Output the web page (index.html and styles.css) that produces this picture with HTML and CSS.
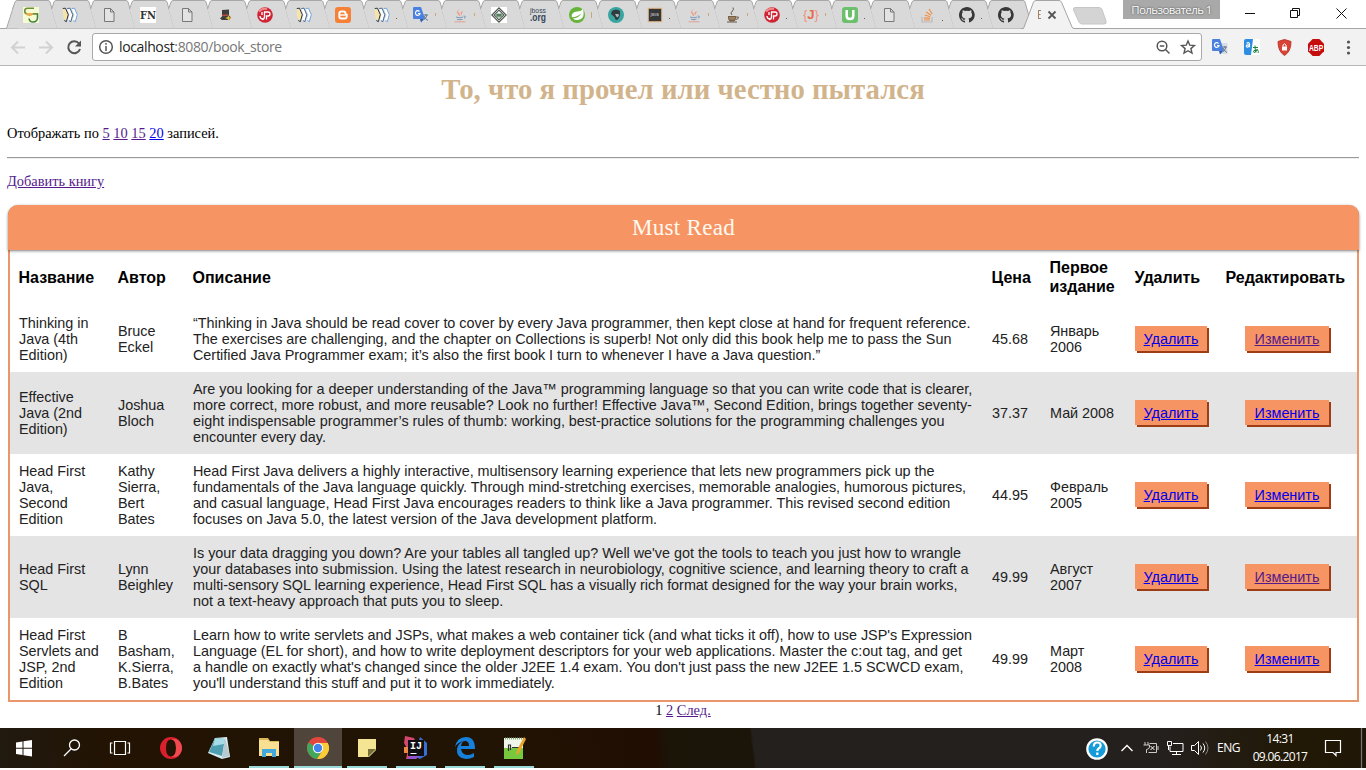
FILE: index.html
```html
<!DOCTYPE html>
<html lang="ru">
<head>
<meta charset="utf-8">
<title>Book store</title>
<link rel="stylesheet" href="styles.css">
</head>
<body>
<svg class="defs" width="0" height="0">
  <defs>
    <symbol id="tab" viewBox="0 0 52 29" overflow="visible"><path d="M12 28.500 6.600 9 9 2Q9.600.5 11 .5H42Q43.500.5 44 2L51.500 28.500Z" fill="#d9d9d9"/><path d="M6.600 9 9 2Q9.600.5 11 .5H42Q43.500.5 44 2L51.500 28.500" fill="none" stroke="#a8a8a8"/></symbol>
    <symbol id="i-sg" viewBox="0 0 16 16"><rect width="16" height="16" fill="#f4fbd5"/><path d="M11 1.300H4.500a2.800 2.800 0 0 0 0 5.600H15" fill="none" stroke="#6f8f35" stroke-width="1.600"/><path d="M14.500 6.500v4.500q-.5 4-4.500 4-3.500 0-4-3.500" fill="none" stroke="#42803b" stroke-width="1.600"/><path d="M3 6h7q0 3-3.500 3T3 6Z" fill="#e8a94f"/></symbol>
    <symbol id="i-books" viewBox="0 0 16 16"><path d="M.5 2.500 3 1.500 6 8 4.500 14 1.500 11Z" fill="#f8e5a6"/><path d="M6.500 2 9 8l-2 6M11 2l3 6-2.500 6" fill="none" stroke="#fff" stroke-width="2.500"/><path d="M.8 1.500 3.500 1.200 6.300 7.700 4.300 14.700 2.300 13.500" fill="none" stroke="#293849"/><path d="M5.300 1.500 8 1.200l2.800 6.500-2 7-2-1.200" fill="none" stroke="#476a92"/><path d="M9.800 1.500l2.700-.3 2.800 6.500-2 7-2-1.200" fill="none" stroke="#70a5df"/></symbol>
    <symbol id="i-page" viewBox="0 0 16 16"><path d="M3.500 1.500h6l3.500 3.500v9.500H3.500ZM9.500 1.500V5H13" fill="#e3e3e3" stroke="#777"/></symbol>
    <symbol id="i-fn" viewBox="0 0 16 16"><rect width="16" height="16" fill="#fff"/><text x="0" y="12" textLength="16" lengthAdjust="spacingAndGlyphs" font-family="DejaVu Serif" font-size="10.500" font-weight="700" fill="#333">FN</text></symbol>
    <symbol id="i-hat" viewBox="0 0 16 16"><path d="M4 3 11 2.500v6l2 2-2 2.500H4l-2-1.500 2-2Z" fill="#3d3d3d"/><path d="M4 8.500 10 8" stroke="#b84e40" stroke-width="1.300"/><path d="m10.500 8 .7 2.200L14 11l-2.800.8L10.500 14l-1-2.200L7 11l2.500-.8Z" fill="#f0c62d"/></symbol>
    <symbol id="i-red" viewBox="0 0 16 16"><circle cx="8" cy="8" r="7.800" fill="#cf2434"/><path d="M2 4.500Q5 1 10 2" stroke="#f08c8c" stroke-width="2" fill="none"/><path d="M5 12.500q2.500 0 2.500-3V5h3.500q2 0 2 2t-2 2H9.500v3.500M3 9q0 3 3 3M5 5v3" fill="none" stroke="#fff" stroke-width="1.300"/></symbol>
    <symbol id="i-blog" viewBox="0 0 16 16"><rect width="16" height="16" rx="3" fill="#f58038"/><path d="M6.500 4.500h2q2 0 2 2 .2 1 1.200 1.200v1.800q0 2-2 2H6.300q-2 0-2-2v-3q0-2 2.200-2Z" fill="none" stroke="#fff" stroke-width="1.900"/><path d="M4 8h7" stroke="#fff" stroke-width="1.400"/></symbol>
    <symbol id="i-gt" viewBox="0 0 16 16"><path d="M6 4h9.500v11H9Z" fill="#d8dde3"/><path d="M0 1q0-1 1-1h7l4 12H1q-1 0-1-1Z" fill="#4a80df"/><path d="m7 12 4 0-3 3.500Z" fill="#285aab"/><path d="M6.500 4.500A2.300 2.300 0 1 0 7 6.500H5" fill="none" stroke="#fff" stroke-width="1.200"/><path d="M10.500 8h4.500M12.800 7v1.500M14 8q-1 4-3.500 5M11 9q1 3 4 4.500" fill="none" stroke="#687788"/></symbol>
    <symbol id="i-java" viewBox="0 0 16 16"><path d="M9 1Q4 4 7.500 6.500 9 8 7.500 9.500 6.500 7.500 5.500 6.500 3.500 4 9 1Zm2 3Q7 5.500 9 7.500 10 9 8.500 9.700" fill="#ef9b84"/><path d="M4 10q4 1.500 7 0M5 12.200q3 .8 5.500 0M11.500 9q3 0 .8 2.500" fill="none" stroke="#819dbd" stroke-width="1.100"/><path d="M2.500 14.800h11" stroke="#e3a090"/></symbol>
    <symbol id="i-diamond" viewBox="0 0 16 16"><rect width="16" height="16" fill="#fff"/><path d="M8 .8 15.200 8 8 15.200.8 8ZM8 3.200 12.800 8 8 12.800 3.200 8Z" fill="none" stroke="#4b554e" stroke-width="1.100"/><path d="M5 6.500h6v4H5Z" fill="#7aa184"/><path d="M6 8h4" stroke="#355c42"/></symbol>
    <symbol id="i-jboss" viewBox="0 0 16 16" overflow="visible"><text x="0" y="6" textLength="16" lengthAdjust="spacingAndGlyphs" font-family="Liberation Sans" font-size="7.500" fill="#34465a">jboss</text><text x="0" y="14" textLength="16" lengthAdjust="spacingAndGlyphs" font-family="Liberation Sans" font-size="10.500" font-weight="700" fill="#34465a">.org</text></symbol>
    <symbol id="i-leaf" viewBox="0 0 16 16"><circle cx="8" cy="8" r="8" fill="#68b43a"/><path d="M14 2q2.500 10-5 11-3 .5-5-1.500Q10 11 12.500 6 9 10 3 10.300 1.500 5.500 8 4.500 12 4.500 14 2Z" fill="#fff"/></symbol>
    <symbol id="i-face" viewBox="0 0 16 16"><circle cx="8" cy="8" r="8" fill="#38a5a0"/><path d="M4 4q4-3 8 0v4q-1 5-4 5-1-1-1.500-3L3 7Z" fill="#303a3f"/><path d="M7 7h3.500l.5 2-2 1.500Z" fill="#a8b8b9"/></symbol>
    <symbol id="i-dark" viewBox="0 0 16 16"><rect x="1.300" y="1.300" width="13.400" height="13.400" fill="#343638" stroke="#e2b27d"/><text x="3.500" y="9" font-size="4.500" font-family="Liberation Sans" fill="#ccc">java</text></symbol>
    <symbol id="i-cup" viewBox="0 0 16 16"><path d="M3 9h8v2q0 2-2 3.500H5q-2-1.500-2-3.500Z" fill="#795f46"/><path d="M11 10h2.500q0 2.500-3 2.500M2 15h10M7 8q-2.500-2 .5-4 1.500-1.500.5-3.500" fill="none" stroke="#6b594a"/><path d="M5 10v2.500M7 10v3M9 10v2.500" stroke="#cbb58c" stroke-width=".8"/></symbol>
    <symbol id="i-j" viewBox="0 0 16 16"><text x="0" y="12" textLength="16" lengthAdjust="spacingAndGlyphs" font-family="Liberation Sans" font-size="12" fill="#f0937c">{<tspan font-weight="700" fill="#e96a4b">J</tspan>}</text></symbol>
    <symbol id="i-u" viewBox="0 0 16 16"><rect width="16" height="16" rx="3" fill="#6cc06b"/><path d="M4.700 3v6q0 3 3.300 3t3.300-3V3" fill="none" stroke="#fff" stroke-width="2.500"/></symbol>
    <symbol id="i-so" viewBox="0 0 16 16"><path d="M2 10v5h10v-5" fill="none" stroke="#b9b9b9" stroke-width="1.200"/><path d="M4 13h6M4 10.800l6 .6M4.700 8l5.600 1.700M6.200 5l4.800 3.300M9 2l3.200 5" stroke="#f29046" stroke-width="1.200"/></symbol>
    <symbol id="i-git" viewBox="0 0 16 16"><path d="M8 0C3.600 0 0 3.600 0 8c0 3.500 2.300 6.500 5.500 7.600.4.100.5-.2.500-.4v-1.500c-2.200.5-2.700-.9-2.700-.9-.4-.9-.9-1.200-.9-1.200-.7-.5.100-.5.100-.5.800.1 1.200.8 1.200.8.700 1.200 1.900.9 2.300.7.100-.5.300-.9.500-1.100-1.800-.2-3.600-.9-3.600-4 0-.9.300-1.600.8-2.100-.1-.200-.4-1 .1-2.100 0 0 .7-.2 2.200.8a7.700 7.700 0 0 1 4 0c1.500-1 2.200-.8 2.200-.8.400 1.100.2 1.900.1 2.100.5.600.8 1.300.8 2.100 0 3.100-1.900 3.700-3.700 3.900.3.300.6.800.6 1.500v2.200c0 .2.100.5.500.4A8 8 0 0 0 8 0Z" fill="#373737"/></symbol>
  </defs>
</svg>

<header class="browser">
  <div class="tabs">
    <svg class="tab"><path d="M.5 28.500 8 6H20V28.500Z" fill="#d9d9d9"/><path d="M.5 28.500 8 5" stroke="#a8a8a8"/><use href="#tab" width="52" height="29"/><use href="#i-sg" x="17" y="7" width="16" height="16"/></svg>
    <svg class="tab"><use href="#tab" width="52" height="29"/><use href="#i-books" x="17" y="7" width="16" height="16"/></svg>
    <svg class="tab"><use href="#tab" width="52" height="29"/><use href="#i-page" x="17" y="7" width="16" height="16"/></svg>
    <svg class="tab"><use href="#tab" width="52" height="29"/><use href="#i-fn" x="17" y="7" width="16" height="16"/></svg>
    <svg class="tab"><use href="#tab" width="52" height="29"/><use href="#i-page" x="17" y="7" width="16" height="16"/></svg>
    <svg class="tab"><use href="#tab" width="52" height="29"/><use href="#i-hat" x="17" y="7" width="16" height="16"/></svg>
    <svg class="tab"><use href="#tab" width="52" height="29"/><use href="#i-red" x="17" y="7" width="16" height="16"/></svg>
    <svg class="tab"><use href="#tab" width="52" height="29"/><use href="#i-books" x="17" y="7" width="16" height="16"/></svg>
    <svg class="tab"><use href="#tab" width="52" height="29"/><use href="#i-blog" x="17" y="7" width="16" height="16"/></svg>
    <svg class="tab"><use href="#tab" width="52" height="29"/><use href="#i-books" x="17" y="7" width="16" height="16"/><path class="dot" d="M39 18.500h1"/></svg>
    <svg class="tab"><use href="#tab" width="52" height="29"/><use href="#i-gt" x="17" y="7" width="16" height="16"/><path class="peek" d="M39.500 13v3"/></svg>
    <svg class="tab"><use href="#tab" width="52" height="29"/><use href="#i-java" x="17" y="7" width="16" height="16"/><path class="peek" d="M39.500 13v3"/></svg>
    <svg class="tab"><use href="#tab" width="52" height="29"/><use href="#i-diamond" x="17" y="7" width="16" height="16"/></svg>
    <svg class="tab"><use href="#tab" width="52" height="29"/><use href="#i-jboss" x="17" y="7" width="16" height="16"/></svg>
    <svg class="tab"><use href="#tab" width="52" height="29"/><use href="#i-leaf" x="17" y="7" width="16" height="16"/><path class="peek" d="M39.500 12v6"/></svg>
    <svg class="tab"><use href="#tab" width="52" height="29"/><use href="#i-face" x="17" y="7" width="16" height="16"/></svg>
    <svg class="tab"><use href="#tab" width="52" height="29"/><use href="#i-dark" x="17" y="7" width="16" height="16"/><path class="dot" d="M39 18.500h1"/></svg>
    <svg class="tab"><use href="#tab" width="52" height="29"/><use href="#i-java" x="17" y="7" width="16" height="16"/><path class="peek" d="M39.500 13v3"/></svg>
    <svg class="tab"><use href="#tab" width="52" height="29"/><use href="#i-cup" x="17" y="7" width="16" height="16"/><path class="peek" d="M39.500 13v3"/></svg>
    <svg class="tab"><use href="#tab" width="52" height="29"/><use href="#i-red" x="17" y="7" width="16" height="16"/><path class="dot" d="M39 18.500h1"/></svg>
    <svg class="tab"><use href="#tab" width="52" height="29"/><use href="#i-j" x="17" y="7" width="16" height="16"/><path class="peek" d="M39.500 13v3"/></svg>
    <svg class="tab"><use href="#tab" width="52" height="29"/><use href="#i-u" x="17" y="7" width="16" height="16"/><path class="dot" d="M39 18.500h1"/></svg>
    <svg class="tab"><use href="#tab" width="52" height="29"/><use href="#i-page" x="17" y="7" width="16" height="16"/></svg>
    <svg class="tab"><use href="#tab" width="52" height="29"/><use href="#i-so" x="17" y="7" width="16" height="16"/><path class="dot" d="M39 20.500h1"/></svg>
    <svg class="tab"><use href="#tab" width="52" height="29"/><use href="#i-git" x="17" y="7" width="16" height="16"/><path class="dot" d="M39 18.500h1"/></svg>
    <svg class="tab"><use href="#tab" width="52" height="29"/><use href="#i-git" x="17" y="7" width="16" height="16"/></svg>
    <svg class="tab active"><path d="M6.500 28.500 16.500 2.200Q17.300.5 19 .5H42Q43.700.5 44.500 2.200L55 27Q55.700 28.500 57 28.500V30H4V28.500Z" fill="#f2f2f2"/><path d="M4 28.500H6.500L16.500 2.200Q17.300.5 19 .5H42Q43.700.5 44.500 2.200L55 27Q55.700 28.500 57 28.500" fill="none" stroke="#a5a5a5"/><path d="M21.500 10v9M21.500 10.500h2.500M21.500 14.500h2M21.500 18.500h2.500" stroke="#a08368"/><path d="m31.500 11.500 7 7m0-7-7 7" stroke="#555" stroke-width="1.800"/><path d="M58 7.500H82Q84 7.500 85 9.500L89 21Q90 24 87 24H65Q63 24 62 22L56.500 10Q56 7.500 58 7.500Z" fill="#d4d4d4" stroke="#c6c6c6"/></svg>
    <span class="user">Пользователь 1</span>
    <svg class="winbtns" width="146" height="28" fill="none" stroke="#111"><path d="M25 13.500h10"/><path d="M70.500 10.500h7v7h-7ZM72.500 10.500v-2h7v7h-2"/><path d="m116.500 8.500 10 10m0-10-10 10"/></svg>
  </div>
  <div class="toolbar">
    <svg class="nav" width="92" height="36" fill="none" stroke-width="2"><path d="M25 18.500H12m6-6-6 6 6 6M39 18.500h13m-6-6 6 6-6 6" stroke="#d2d2d2"/><path d="M79 14.500A6 6 0 1 0 80 20" stroke="#555"/><path d="M81 11.500v6h-6Z" fill="#555"/></svg>
    <div class="omnibox">
      <svg width="22" height="26" fill="none" stroke="#555" stroke-width="1.500"><circle cx="13" cy="13" r="6.300"/><path d="M13 12v5M13 9v1.700"/></svg>
      <span class="url">localhost<i>:8080/book_store</i></span>
      <svg width="47" height="26" fill="none" stroke="#555" stroke-width="1.500"><circle cx="8" cy="12" r="4.800"/><path d="m11.500 15.500 4 4"/><path d="M5.800 12h4.400"/><path d="m34 7 1.800 4.200 4.600.4-3.500 3 1.100 4.500-4-2.400-4 2.400 1.100-4.500-3.500-3 4.600-.4Z" stroke-width="1.400"/></svg>
    </div>
    <svg class="ext" width="164" height="36"><use href="#i-gt" x="10" y="10" width="16" height="16"/><rect x="47" y="10" width="11" height="16" fill="#fff"/><path d="M42 12q0-2 2-2h7l-2 16h-5q-2 0-2-2Z" fill="#2c8de3"/><path d="M44.500 14.200q3-1.500 3 1v3m0-2.500q-3.500 0-3.200 1.700.5 1.500 3.200-.3" stroke="#fff" fill="none" stroke-width="1.200"/><path d="M51 18.500h5M53 16.500q0 5 1 7M55.500 20q-2 4-3.500 3.500-2-1.500 1.500-2.500 4-.5 2.500 3" stroke="#1b843d" fill="none"/><path d="m82.500 10.500 6.500 2q0 10-6.500 14Q76 22.500 76 12.500Z" fill="#d84335" stroke="#bd3a2f"/><path d="M80 17.500h5v4h-5Z" fill="#fff"/><path d="M81 17.500v-1.500q1.500-2.500 3 0v1.500" fill="none" stroke="#fff"/><path d="m110.700 10h6.600l4.700 4.700v7.600l-4.700 4.700h-6.600l-4.700-4.700v-7.600Z" fill="#c60d0d"/><text x="107" y="21.700" textLength="14.200" lengthAdjust="spacingAndGlyphs" font-family="Liberation Sans" font-size="8.500" font-weight="700" fill="#fff">ABP</text><g fill="#555"><circle cx="146.500" cy="13" r="1.600"/><circle cx="146.500" cy="18.500" r="1.600"/><circle cx="146.500" cy="24" r="1.600"/></g></svg>
  </div>
</header>

<main class="page">
  <h1>То, что я прочел или честно пытался</h1>
  <p class="count">Отображать по <a class="seen" href="#">5</a> <a class="seen" href="#">10</a> <a class="seen" href="#">15</a> <a href="#">20</a> записей.</p>
  <hr>
  <p class="add"><a class="seen" href="#">Добавить книгу</a></p>
  <section class="books">
    <div class="caption">Must Read</div>
    <table>
      <colgroup><col class="c1"><col class="c2"><col class="c3"><col class="c4"><col class="c5"><col class="c6"><col class="c7"></colgroup>
      <thead><tr><th>Название</th><th>Автор</th><th>Описание</th><th>Цена</th><th>Первое<br>издание</th><th>Удалить</th><th>Редактировать</th></tr></thead>
      <tbody>
        <tr class="short"><td>Thinking in<br>Java (4th<br>Edition)</td><td>Bruce<br>Eckel</td><td>“Thinking in Java should be read cover to cover by every Java programmer, then kept close at hand for frequent reference.<br>The exercises are challenging, and the chapter on Collections is superb! Not only did this book help me to pass the Sun<br>Certified Java Programmer exam; it’s also the first book I turn to whenever I have a Java question.”</td><td>45.68</td><td>Январь<br>2006</td><td><span class="btn"><a href="#">Удалить</a></span></td><td><span class="btn edit"><a class="seen" href="#">Изменить</a></span></td></tr>
        <tr><td>Effective<br>Java (2nd<br>Edition)</td><td>Joshua<br>Bloch</td><td>Are you looking for a deeper understanding of the Java™ programming language so that you can write code that is clearer,<br>more correct, more robust, and more reusable? Look no further! Effective Java™, Second Edition, brings together seventy-<br>eight indispensable programmer’s rules of thumb: working, best-practice solutions for the programming challenges you<br>encounter every day.</td><td>37.37</td><td>Май 2008</td><td><span class="btn"><a href="#">Удалить</a></span></td><td><span class="btn edit"><a href="#">Изменить</a></span></td></tr>
        <tr><td>Head First<br>Java,<br>Second<br>Edition</td><td>Kathy<br>Sierra,<br>Bert<br>Bates</td><td>Head First Java delivers a highly interactive, multisensory learning experience that lets new programmers pick up the<br>fundamentals of the Java language quickly. Through mind-stretching exercises, memorable analogies, humorous pictures,<br>and casual language, Head First Java encourages readers to think like a Java programmer. This revised second edition<br>focuses on Java 5.0, the latest version of the Java development platform.</td><td>44.95</td><td>Февраль<br>2005</td><td><span class="btn"><a href="#">Удалить</a></span></td><td><span class="btn edit"><a href="#">Изменить</a></span></td></tr>
        <tr><td>Head First<br>SQL</td><td>Lynn<br>Beighley</td><td>Is your data dragging you down? Are your tables all tangled up? Well we've got the tools to teach you just how to wrangle<br>your databases into submission. Using the latest research in neurobiology, cognitive science, and learning theory to craft a<br>multi-sensory SQL learning experience, Head First SQL has a visually rich format designed for the way your brain works,<br>not a text-heavy approach that puts you to sleep.</td><td>49.99</td><td>Август<br>2007</td><td><span class="btn"><a href="#">Удалить</a></span></td><td><span class="btn edit"><a class="seen" href="#">Изменить</a></span></td></tr>
        <tr><td>Head First<br>Servlets and<br>JSP, 2nd<br>Edition</td><td>B<br>Basham,<br>K.Sierra,<br>B.Bates</td><td>Learn how to write servlets and JSPs, what makes a web container tick (and what ticks it off), how to use JSP's Expression<br>Language (EL for short), and how to write deployment descriptors for your web applications. Master the c:out tag, and get<br>a handle on exactly what's changed since the older J2EE 1.4 exam. You don't just pass the new J2EE 1.5 SCWCD exam,<br>you'll understand this stuff and put it to work immediately.</td><td>49.99</td><td>Март<br>2008</td><td><span class="btn"><a href="#">Удалить</a></span></td><td><span class="btn edit"><a href="#">Изменить</a></span></td></tr>
      </tbody>
    </table>
  </section>
  <p class="pager">1 <a class="seen" href="#">2</a> <a class="seen" href="#">След.</a></p>
</main>

<footer class="taskbar">
  <div class="apps">
    <svg viewBox="0 0 48 40"><path d="m16 14.500 6.500-1v6.300H16Zm7.500-1.200 8.500-1.300v7.800h-8.500ZM16 20.800h6.500V27L16 26Zm7.500 0H32V28.500l-8.500-1.200Z" fill="#fff"/></svg>
    <svg viewBox="1 0 48 40" fill="none" stroke="#fff" stroke-width="1.300"><circle cx="26.500" cy="17" r="5"/><path d="m23 21-7 7"/></svg>
    <svg viewBox="2 0 48 40" fill="none" stroke="#fff" stroke-width="1.200"><path d="M18.500 13.500h11v13h-11ZM16.500 15h-2v10h2M31.500 15h2v10h-2"/></svg>
    <svg viewBox="0 0 48 40"><path d="M24 9a11 11 0 1 0 0 22 11 11 0 0 0 0-22Zm0 2.500q5 0 5 8.500t-5 8.500-5-8.500 5-8.500Z" fill="#d9202c" fill-rule="evenodd"/><path d="M24 11.500q4-1 7 .5 4 3.500 4 8t-4 8q-3 1.500-7 .5 5 0 5-8.500t-5-8.500Z" fill="#f04a50"/></svg>
    <svg viewBox="1 0 48 40"><path d="m20 10 12-1 3 20-8 2-14-6Z" fill="#d8eef3"/><path d="m20 10 10 1-3 17-13-4Z" fill="#4f9fb2"/><path d="m20 10 10 1-1 5-11 2Z" fill="#a5dce5"/><path d="m30 10 5 18-8 2Z" fill="#b9cbd1"/></svg>
    <svg class="open" viewBox="4 0 40 40"><path d="M14 10h9l2 3h9v5H14Z" fill="#d9b657"/><path d="M14 12h9l2 2h9v14H14Z" fill="#f8df92"/><path d="M17 29v-8h14v8h-4v-4h-6v4Z" fill="#43a8db"/></svg>
    <svg class="open current" viewBox="0 0 48 40"><circle cx="24" cy="20" r="11" fill="#e1473c"/><path d="M24 20 14.500 14.500A11 11 0 0 0 23 31l5.500-9Z" fill="#42a65b"/><path d="M24 15h9.800A11 11 0 0 1 23 31l5.500-8.500Z" fill="#f8cc37"/><circle cx="24" cy="20" r="5.200" fill="#fff"/><circle cx="24" cy="20" r="4.200" fill="#4284ed"/></svg>
    <svg class="open" viewBox="4 0 40 40"><path d="M15 11h18v11l-7 7H15Z" fill="#f4e595"/><path d="M25 29v-8h8Z" fill="#777039"/></svg>
    <svg class="open" viewBox="4 0 40 40"><path d="m13 8 9 2 3 7-5 14-6 0 2-9-4-7Z" fill="#d4476f"/><path d="M12 19h6v6h-6Z" fill="#ee8746"/><path d="m28 9 7 6v12l-7 4-6-3Z" fill="#376fd4"/><path d="m15 31 7-7 6 4-4 3Z" fill="#9454cf"/><rect x="16" y="12" width="16" height="16" fill="#101014"/><text x="18" y="21" font-family="Liberation Mono" font-size="10" font-weight="700" fill="#fff">IJ</text><path d="M18.500 25.500h6" stroke="#fff"/></svg>
    <svg class="open" viewBox="4 0 40 40"><path d="M14 19q2-10 11-10 9 0 9 12H20q1 6 7 6 3 0 6-2v4q-4 2-8 2-10-1-9-10 1-6 7-8-6 1-9 6Zm6-1h8q0-5-4-5-3 0-4 5Z" fill="#1681dc" fill-rule="evenodd"/></svg>
    <svg class="open" viewBox="4 0 40 40"><rect x="14" y="10" width="19" height="21" fill="#f1f6ea"/><path d="M14 20h19v11H14Z" fill="#78c83d"/><path d="M15 10.500h17" stroke="#87a978" stroke-width="2" stroke-dasharray="1 1"/><path d="M18.500 23v-6h2v5M22 19.500h7" fill="none" stroke="#333" stroke-width="1.200"/><path d="m34 9 2 2-7 14-3 2 1-5Z" fill="#e9a42a"/></svg>
  </div>
  <svg class="tray" width="134" height="40" fill="none" stroke="#fff"><circle cx="17" cy="21" r="9.700" fill="#159bd7" stroke-width="2.200"/><path d="M13.800 18.500q0-4 3.500-4t3.300 3.300q0 1.700-2 2.700-1.300.8-1.300 2.500M17.300 24.500V27" stroke-width="2.200"/><path d="m41.500 23 5.500-5.500 5.500 5.500" stroke-width="1.400"/><path d="M65 14v3m3-3v3M63.500 17h6v2q0 2-3 2.500V25M69.500 15.500h7v9h-8M78 18v4" stroke="#ccc"/><path d="m70.500 18 4 4m0-4-4 4"/><path d="M87.500 13.500h4v4h-4ZM93 15.500h10v8H90v-5M96.500 23.500v3M92 26.500h9M88.500 18v4"/><path d="M111.500 17.500h3l4-4v13l-4-4h-3Z"/><path d="M120.500 17.500q2 2.500 0 5M123 15.500q3.500 4.500 0 9"/><path d="M125.500 13.500q5 6.500 0 13" stroke="#888"/></svg>
  <span class="lang">ENG</span>
  <div class="clock">14:31<br>09.06.2017</div>
  <svg class="note" width="49" height="40" fill="none" stroke="#fff" stroke-width="1.200"><path d="M8.500 12.500h15v12H19v3l-3-3H8.500Z"/><path d="M44.500 0v40" stroke="#777"/></svg>
</footer>
</body>
</html>
```
FILE: styles.css
```css
* { box-sizing: border-box; }
html, body { margin: 0; background: #fff; overflow: hidden; }
body { display: flex; flex-direction: column; height: 770px; font-family: "Liberation Serif", serif; color: #000; }
.defs { display: none; }
svg { display: block; flex: none; }

.browser { height: 66px; flex: none; }
.tabs { display: flex; height: 29px; padding-left: 6px; border-bottom: 1px solid #a5a5a5; }
.tab { width: 39px; height: 29px; overflow: visible; }
.tab.active { width: 106px; margin-left: -3px; }
.dot { stroke: #786040; }
.peek { stroke: #c9a878; }
.user { width: 97px; height: 19px; background: #a9a9a9; color: #fff; font: 11.500px/19px "Open Sans", sans-serif; letter-spacing: -.6px; text-align: center; text-shadow: 0 0 2px #333; white-space: nowrap; }
.toolbar { display: flex; height: 37px; background: #f2f2f2; border-bottom: 1px solid #b5b5b5; }
.omnibox { display: flex; align-items: center; width: 1110px; height: 28px; margin-top: 4px; background: #fff; border: 1px solid #a9a9a9; border-radius: 3px; }
.url { flex: 1; margin-left: 4px; font: 14px/24px "Open Sans", sans-serif; letter-spacing: -.37px; color: #222; }
.url i { font-style: normal; color: #777; }

.page { height: 662px; flex: none; padding: 0 7px; font-size: 14.4px; line-height: 16px; }
h1 { margin: 6px 0 0; font-size: 28.8px; line-height: 34px; color: #d2b48c; text-align: center; }
p { margin: 0; }
a { color: #0000ee; }
a.seen { color: #551a8b; }
.count { margin-top: 19px; }
hr { margin: 16px 0 0; height: 2px; border: 0; border-top: 1px solid #9a9a9a; border-bottom: 1px solid #eee; }
.add { margin-top: 14px; }
.books { width: 1351px; margin: 16px 0 0 1px; height: 497px; border: 2px solid #e9966c; border-top: 0; border-radius: 10px 10px 0 0; }
.caption { height: 45px; margin: 0 -2px; background: #f79463; color: #fffaf0; font-size: 23.040px; letter-spacing: .3px; line-height: 45px; text-align: center; border-radius: 10px 10px 0 0; box-shadow: 0 1px 3px rgba(0,0,0,.5); }
table { table-layout: fixed; width: 1347px; border-collapse: collapse; font-family: "Liberation Sans", sans-serif; letter-spacing: -.02px; }
.c1 { width: 99px; } .c2 { width: 75px; } .c3 { width: 799px; } .c4 { width: 58px; } .c5 { width: 85px; } .c6 { width: 91px; } .c7 { width: 140px; }
th { height: 56px; padding: 0 0 2px 8.500px; font-size: 16px; line-height: 19px; text-align: left; letter-spacing: 0; }
td { height: 82px; padding: 0 0 0 9px; white-space: nowrap; vertical-align: middle; color: #222; }
.short td { height: 66px; }
tbody tr:nth-child(even) { background: #e4e4e4; }
.btn { display: block; width: 72px; height: 25px; margin-bottom: 2px; line-height: 26px; text-align: center; background: #f79463; box-shadow: 2px 2px 0 #9c3d16; }
.edit { width: 84px; margin-left: 19px; }
.pager { text-align: center; }

.taskbar { display: flex; height: 40px; flex: none; background: linear-gradient(83deg, #211a10 0, #221303 8%, #211404 36%, #210d02 48%, #1b1508 49%, #1b1408 55%, #24201e 55.200%, #24201e 85%, #211806 94%, #211706); color: #fff; font-family: "Open Sans", sans-serif; font-size: 12px; }
.apps { display: flex; gap: 1px; width: 1080px; flex: none; }
.apps svg { width: 48px; height: 40px; }
.apps .open { width: 40px; margin: 0 4px; background: linear-gradient(#99d9d9, #99d9d9) bottom / 100% 2px no-repeat; }
.apps .current { width: 48px; margin: 0; background-color: #4f453b; }
.lang { margin-left: 3px; width: 26px; line-height: 40px; letter-spacing: -.5px; }
.clock { width: 74px; text-align: center; line-height: 18px; padding-top: 2px; letter-spacing: -.65px; white-space: nowrap; }
```
